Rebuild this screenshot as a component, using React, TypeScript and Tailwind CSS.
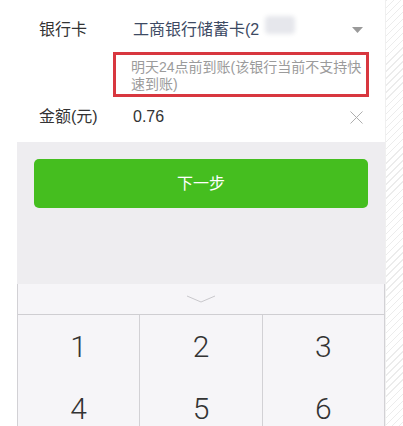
import { X } from "lucide-react";

const keys = [
  ["1", "2", "3"],
  ["4", "5", "6"],
];

const font = "font-['Liberation_Sans','Noto_Sans_CJK_SC',sans-serif]";

function Caret() {
  return (
    <svg width="11" height="6" viewBox="0 0 11 6" aria-hidden>
      <path d="M0 0h11L5.5 6z" fill="#9a9a9a" />
    </svg>
  );
}

function Chevron() {
  return (
    <svg width="30" height="8" viewBox="0 0 30 8" aria-hidden>
      <path d="M1 1l14 6 14-6" fill="none" stroke="#c9c8cc" strokeWidth="1" />
    </svg>
  );
}

export default function App() {
  return (
    <div className={`flex h-[426px] w-[403px] overflow-hidden bg-white ${font}`}>
      <div className="w-[17px] shrink-0 bg-white" />

      <div className="flex w-[368px] shrink-0 flex-col">
        {/* form */}
        <section className="flex h-[142px] shrink-0 flex-col bg-white pt-[18px]">
          <div className="flex h-6 items-center text-[16px] leading-6">
            <span className="w-[116px] pl-[22px] text-[#333]">银行卡</span>
            <span className="relative text-[#3d4a63]">
              工商银行储蓄卡(2
              <span className="absolute left-[132px] top-[-2px] h-[18px] w-[30px] rounded-sm bg-[#e6e7ec] blur-[2px]" />
            </span>
            <span className="ml-auto mr-[22px] flex items-center">
              <Caret />
            </span>
          </div>

          <div className="ml-[96px] mt-[10px] h-[45px] w-[256px] border-[3px] border-[#d8373f] pl-[15px] pt-[4px] text-[14px] leading-[17px] whitespace-nowrap text-[#9b9b9b]">
            明天24点前到账(该银行当前不支持快
            <br />
            速到账)
          </div>

          <div className="mt-[8px] flex h-6 items-center text-[16px] leading-6 text-[#333]">
            <span className="w-[116px] pl-[22px]">金额(元)</span>
            <span>0.76</span>
            <X className="ml-auto mr-[17px] h-[23px] w-[23px] text-[#aaa]" strokeWidth={1} />
          </div>
        </section>

        {/* action */}
        <section className="flex h-[142px] shrink-0 flex-col bg-[#eeedf0] pt-[17px]">
          <button className="mx-[17px] flex h-[49px] items-center justify-center rounded-[5px] bg-[#45be1f] text-[16px] text-white">
            下一步
          </button>
        </section>

        {/* keypad */}
        <section className="flex flex-1 flex-col border-x border-[#d2d1d5] bg-[#f6f5f8]">
          <div className="flex h-[31px] shrink-0 items-center justify-center border-b border-[#cfced2]">
            <Chevron />
          </div>
          {keys.map((row) => (
            <div key={row[0]} className="flex h-[62px] shrink-0">
              {row.map((k, i) => (
                <div
                  key={k}
                  className={`flex flex-1 items-center justify-center font-['Roboto',sans-serif] text-[30px] font-light text-[#333] ${
                    i > 0 ? "border-l border-[#d2d1d5]" : ""
                  }`}
                >
                  {k}
                </div>
              ))}
            </div>
          ))}
        </section>
      </div>

      <div className="flex-1 border-l border-[#f0f0f0] bg-[repeating-linear-gradient(135deg,#ececec_0,#ececec_1px,#ffffff_1px,#ffffff_5px)]" />
    </div>
  );
}
